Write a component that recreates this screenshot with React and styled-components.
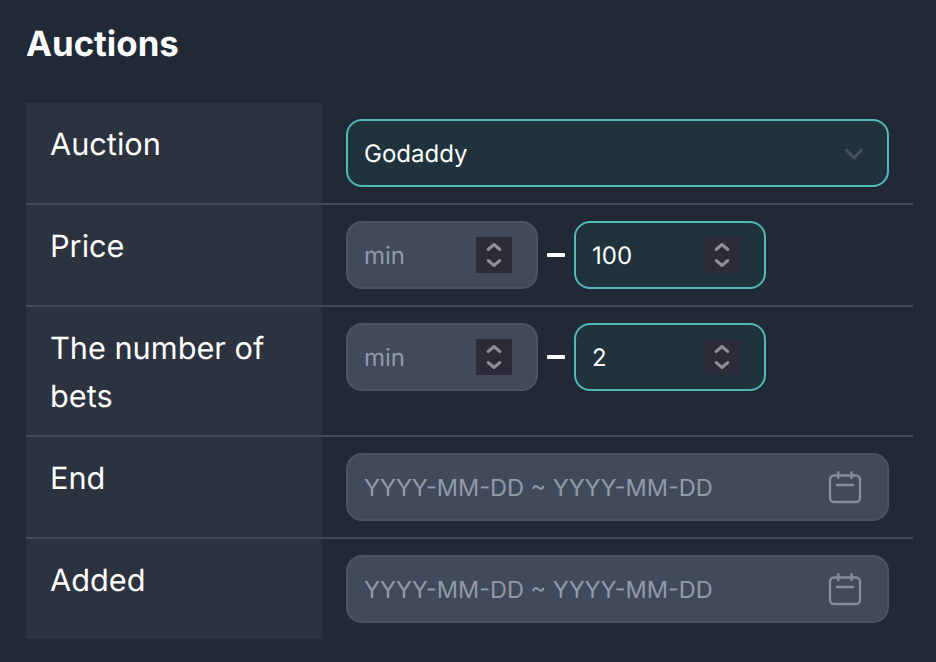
import React from "react";
import styled, { createGlobalStyle } from "styled-components";

const GlobalStyle = createGlobalStyle`
  html, body {
    margin: 0;
    background: #222936;
    font-family: Inter, "Liberation Sans", sans-serif;
    color: #fff;
    text-rendering: geometricPrecision;
  }
`;

const Page = styled.div`
  width: 936px;
  height: 662px;
  box-sizing: border-box;
  padding: 24px 23px 0 26px;
  overflow: hidden;
`;

const Title = styled.h2`
  margin: 0 0 38px;
  font-size: 34.8px;
  line-height: 41px;
  font-weight: 700;
`;

const Table = styled.div`
  display: flex;
  flex-direction: column;
`;

const Row = styled.div`
  display: grid;
  grid-template-columns: 296px 1fr;
  border-bottom: ${(p) => (p.$last ? "none" : "2px solid #454a54")};
`;

const Label = styled.div`
  background: #2c323e;
  padding: 18px 24px 14px 24px;
  font-size: 30.7px;
  line-height: 48px;
  font-weight: 400;
`;

const Cell = styled.div`
  display: flex;
  align-items: flex-start;
  padding: 16px 24px;
`;

const Range = styled.div`
  display: flex;
  align-items: center;
`;

const Field = styled.div`
  display: flex;
  align-items: center;
  box-sizing: border-box;
  height: 68px;
  width: ${(p) => p.$width || "543px"};
  padding: 0 16px;
  border-radius: 16px;
  border: 2px solid ${(p) => (p.$active ? "#52b8bb" : "#4c5464")};
  background: ${(p) => (p.$active ? "#20323c" : "#414a5d")};
`;

const Value = styled.span`
  flex: 1;
  padding-top: 2px;
  font-size: ${(p) => p.$size || "24px"};
  line-height: 32px;
  color: ${(p) => (p.$placeholder ? "#929aa9" : "#fff")};
`;

const Stepper = styled.span`
  display: flex;
  align-items: center;
  justify-content: center;
  width: 36px;
  height: 36px;
  margin-right: 8px;
  background: #2d2b37;
  color: #8e8d98;
`;

const Dash = styled.span`
  display: block;
  width: 18px;
  height: 4px;
  margin: 0 9px;
  border-radius: 1px;
  background: #fff;
`;

const ChevronWrap = styled.span`
  display: flex;
  margin: 2px 6px 0 0;
  color: #484e5c;
`;

const CalendarWrap = styled.span`
  display: flex;
  margin-right: 9px;
  color: #858c9b;
`;

const UpDown = () => (
  <svg width="20" height="28" viewBox="0 0 20 28" fill="none" stroke="currentColor" strokeWidth="3" strokeLinecap="round" strokeLinejoin="round">
    <path d="M4.2 8.5 10 3.5l5.8 5" />
    <path d="M4.2 19.5 10 24.5l5.8-5" />
  </svg>
);

const ChevronDown = () => (
  <svg width="22" height="14" viewBox="0 0 22 14" fill="none" stroke="currentColor" strokeWidth="3" strokeLinecap="round" strokeLinejoin="round">
    <path d="M3.5 3 11 11l7.5-8" />
  </svg>
);

const Calendar = () => (
  <svg width="34" height="34" viewBox="0 0 34 34" fill="none" stroke="currentColor" strokeWidth="2.4" strokeLinecap="round" strokeLinejoin="round">
    <rect x="2" y="5.5" width="30" height="26.5" rx="4" />
    <path d="M10.3 2.2V8M23.5 2.2V8M9 15h16" />
  </svg>
);

const RangeField = ({ value }) => (
  <Field $width="192px" $active={!!value}>
    <Value $placeholder={!value}>{value || "min"}</Value>
    <Stepper>
      <UpDown />
    </Stepper>
  </Field>
);

const DateField = () => (
  <Field>
    <Value $placeholder $size="23.5px">YYYY-MM-DD ~ YYYY-MM-DD</Value>
    <CalendarWrap>
      <Calendar />
    </CalendarWrap>
  </Field>
);

export default function App() {
  return (
    <Page>
      <GlobalStyle />
      <Title>Auctions</Title>
      <Table>
        <Row>
          <Label>Auction</Label>
          <Cell>
            <Field $active>
              <Value>Godaddy</Value>
              <ChevronWrap>
                <ChevronDown />
              </ChevronWrap>
            </Field>
          </Cell>
        </Row>
        <Row>
          <Label>Price</Label>
          <Cell>
            <Range>
              <RangeField />
              <Dash />
              <RangeField value="100" />
            </Range>
          </Cell>
        </Row>
        <Row>
          <Label>The number of bets</Label>
          <Cell>
            <Range>
              <RangeField />
              <Dash />
              <RangeField value="2" />
            </Range>
          </Cell>
        </Row>
        <Row>
          <Label>End</Label>
          <Cell>
            <DateField />
          </Cell>
        </Row>
        <Row $last>
          <Label>Added</Label>
          <Cell>
            <DateField />
          </Cell>
        </Row>
      </Table>
    </Page>
  );
}
